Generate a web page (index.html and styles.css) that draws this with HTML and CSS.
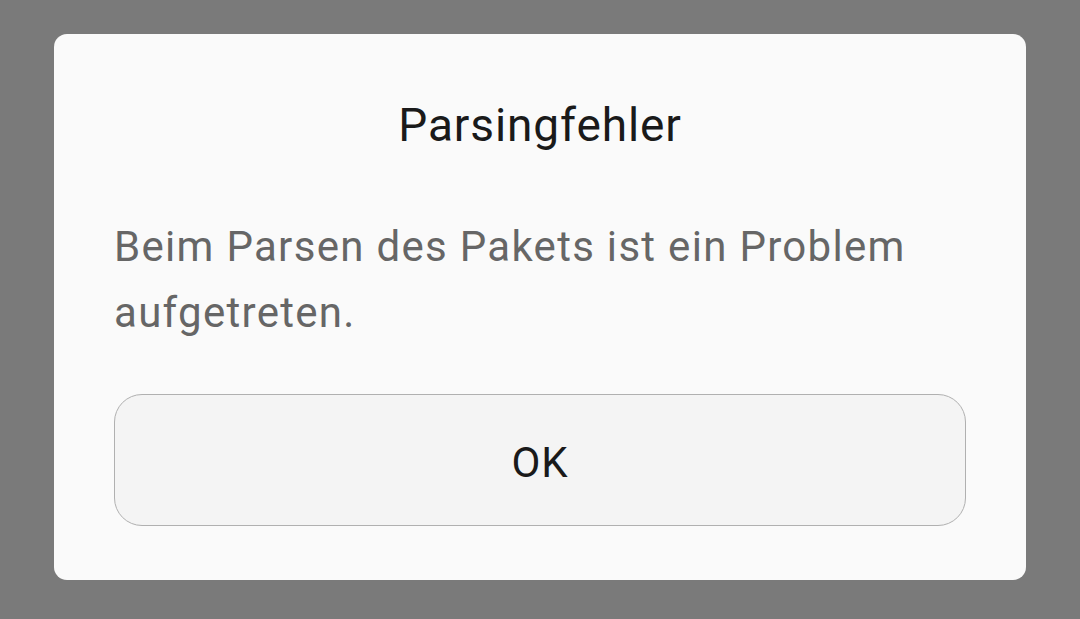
FILE: index.html
```html
<!DOCTYPE html>
<html lang="de">
<head>
<meta charset="utf-8">
<link rel="stylesheet" href="styles.css">
</head>
<body>
<div class="screen">
  <div class="dialog">
    <div class="title">Parsingfehler</div>
    <div class="message">Beim Parsen des Pakets ist ein Problem aufgetreten.</div>
    <div class="button">OK</div>
  </div>
</div>
</body>
</html>
```
FILE: styles.css
```css
html, body {
  margin: 0;
  padding: 0;
}
body {
  background: #7a7a7a;
  font-family: Roboto, "Noto Sans", sans-serif;
}
.screen {
  width: 1080px;
  height: 619px;
  padding-top: 34px;
  padding-left: 54px;
  box-sizing: border-box;
}
.dialog {
  width: 972px;
  height: 546px;
  background: #fafafa;
  border-radius: 13px;
  box-sizing: border-box;
  padding: 0 60px;
  display: flex;
  flex-direction: column;
}
.title {
  margin-top: 65px;
  text-align: center;
  font-size: 46px;
  line-height: 52px;
  letter-spacing: 0.9px;
  color: #1a1a1a;
}
.message {
  margin-top: 63px;
  font-size: 42px;
  line-height: 66px;
  letter-spacing: 1.3px;
  color: #666666;
}
.button {
  margin-top: 48px;
  height: 132px;
  padding-top: 4px;
  border: 1.5px solid #b0b0b0;
  border-radius: 28px;
  background: #f4f4f4;
  box-sizing: border-box;
  display: flex;
  align-items: center;
  justify-content: center;
  font-size: 42px;
  letter-spacing: 1px;
  color: #1a1a1a;
}
```
